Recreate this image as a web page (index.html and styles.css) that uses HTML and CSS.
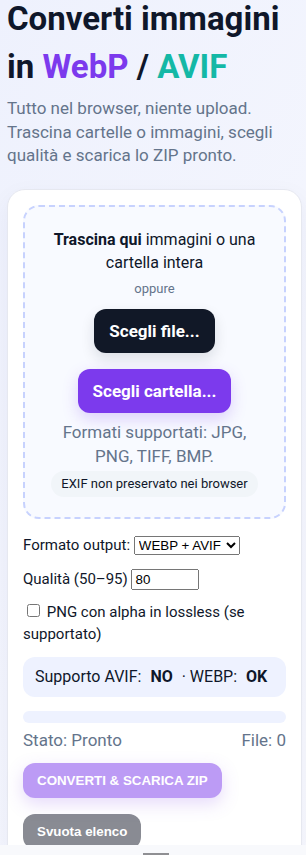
FILE: index.html
```html
<!DOCTYPE html>
<html lang="it">
<head>
    <meta charset="UTF-8">
    <meta name="viewport" content="width=device-width, initial-scale=1.0">
    <title>Converti immagini in WebP / AVIF</title>
    <link rel="stylesheet" href="styles.css">
</head>
<body>
    <main class="page">
        <h1 class="title"><span>Converti immagini</span> <span>in <span class="webp">WebP</span> / <span class="avif">AVIF</span></span></h1>
        <p class="lead">Tutto nel browser, niente upload. Trascina cartelle o immagini, scegli qualità e scarica lo ZIP pronto.</p>

        <section class="card">
            <div class="drop">
                <p class="drop-title"><strong>Trascina qui</strong> immagini o una cartella intera</p>
                <p class="drop-or">oppure</p>
                <button class="btn btn-dark">Scegli file...</button>
                <button class="btn btn-purple">Scegli cartella...</button>
                <p class="drop-formats">Formati supportati: JPG, PNG, TIFF, BMP.</p>
                <span class="pill">EXIF non preservato nei browser</span>
            </div>

            <div class="options">
                <label class="row">Formato output:
                    <select>
                        <option>WEBP + AVIF</option>
                        <option>Solo WEBP</option>
                        <option>Solo AVIF</option>
                    </select>
                </label>
                <label class="row">Qualità (50–95) <input type="number" class="quality" min="50" max="95" value="80"></label>
                <label class="row row-check"><input type="checkbox"> PNG con alpha in lossless (se supportato)</label>
            </div>

            <div class="support">Supporto AVIF: <b>NO</b> · WEBP: <b>OK</b></div>

            <div class="progress"><div class="progress-bar" style="width: 0%"></div></div>
            <div class="status">
                <span>Stato: Pronto</span>
                <span>File: 0</span>
            </div>

            <div class="actions">
                <button class="btn-convert" disabled>Converti &amp; scarica ZIP</button>
                <button class="btn-clear">Svuota elenco</button>
            </div>
        </section>
    </main>

    <div class="bottom-bar"><span></span></div>
</body>
</html>
```

FILE: styles.css
```css
* { box-sizing: border-box; }
body {
    margin: 0;
    min-height: 100vh;
    font-family: Roboto, sans-serif;
    color: #0f172a;
    background: linear-gradient(120deg, #eef1fd, #f8f9fe);
}
.page { padding: 0 4px 40px 7px; }

.title {
    margin: -5px 0 0;
    font-size: 33px;
    line-height: 48px;
    font-weight: 700;
}
.title > span { display: inline-block; }
.webp { color: #7c3aed; }
.avif { color: #14b8a6; }

.lead {
    margin: 6px 0 0;
    font-size: 17px;
    line-height: 23.7px;
    color: #64748b;
}

.card {
    margin-top: 21px;
    padding: 15px;
    background: #fff;
    border: 1px solid #e6e8f0;
    border-radius: 18px;
    box-shadow: 0 8px 24px rgba(30, 41, 99, 0.05);
}

.drop {
    display: flex;
    flex-direction: column;
    align-items: center;
    padding: 21px 12px 20px;
    text-align: center;
    background: #f8faff;
    border: 2px dashed #c7d2fe;
    border-radius: 16px;
}
.drop p { margin: 0; }
.drop-title { font-size: 16px; line-height: 23px; }
.drop .drop-or {
    margin: 6px 0 11px;
    font-size: 13px;
    line-height: 18px;
    color: #64748b;
}
.btn {
    font-family: inherit;
    font-size: 17px;
    font-weight: 700;
    line-height: 24px;
    color: #fff;
    padding: 10px 15px;
    border: none;
    border-radius: 12px;
    cursor: pointer;
}
.btn-dark {
    background: #111827;
    box-shadow: 0 6px 14px rgba(17, 24, 39, 0.12);
}
.btn-purple {
    margin-top: 16px;
    background: #7c3aed;
    box-shadow: 0 6px 16px rgba(124, 58, 237, 0.22);
}
.drop .drop-formats {
    margin-top: 8px;
    padding: 0 18px;
    font-size: 17px;
    line-height: 23.5px;
    color: #64748b;
}
.pill {
    margin-top: 3px;
    padding: 4px 10px;
    font-size: 13px;
    line-height: 18px;
    background: #f1f5f9;
    border-radius: 999px;
}

.options {
    display: flex;
    flex-direction: column;
    gap: 10px;
    margin-top: 14px;
    font-size: 15px;
    line-height: 24px;
}
.row-check { line-height: 22px; }
.quality { width: 68px; }

.support {
    margin-top: 12px;
    padding: 8px 12px;
    font-size: 16px;
    line-height: 24px;
    background: #eef2ff;
    border-radius: 12px;
    white-space: nowrap;
}
.support b { margin: 0 5px; }

.progress {
    height: 12px;
    margin-top: 14px;
    background: #eef2ff;
    border-radius: 999px;
    overflow: hidden;
}
.progress-bar { height: 100%; background: #7c3aed; }

.status {
    display: flex;
    justify-content: space-between;
    margin-top: 5px;
    font-size: 17px;
    line-height: 24px;
    color: #64748b;
}

.actions {
    display: flex;
    flex-direction: column;
    align-items: flex-start;
    gap: 16px;
    margin-top: 11px;
}
.btn-convert, .btn-clear {
    font-family: "Liberation Sans", Arial, sans-serif;
    font-size: 13.333px;
    font-weight: 700;
    line-height: 15px;
    color: #fff;
    padding: 10px 14px;
    border: none;
    border-radius: 12px;
}
.btn-convert {
    text-transform: uppercase;
    background: #7c3aed;
    opacity: 0.5;
    box-shadow: 0 6px 16px rgba(124, 58, 237, 0.35);
}
.btn-clear { background: #898b93; }

.bottom-bar {
    position: fixed;
    left: 0;
    right: 0;
    bottom: 0;
    height: 10px;
    background: #f8f9fc;
}
.bottom-bar span {
    position: absolute;
    left: 143px;
    bottom: 0;
    width: 26px;
    height: 2px;
    background: #8f8f93;
}
```
